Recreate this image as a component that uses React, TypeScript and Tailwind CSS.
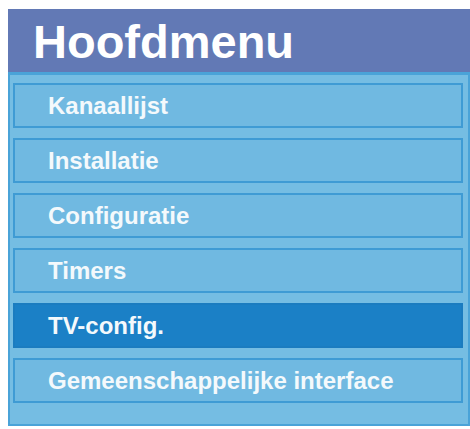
import React from "react";

const items = [
  "Kanaallijst",
  "Installatie",
  "Configuratie",
  "Timers",
  "TV-config.",
  "Gemeenschappelijke interface",
];

export default function App() {
  return (
    <div
      className="w-[470px] h-[429px] bg-white pl-[8px] pt-[9px] overflow-hidden"
      style={{ fontFamily: '"Liberation Sans", Arial, sans-serif' }}
    >
      <div className="w-[462px] flex flex-col">
        <div className="h-[63px] bg-[#6279b5] pl-[25px] flex items-center">
          <span className="text-[47px] font-bold text-white leading-none mt-[1px]">
            Hoofdmenu
          </span>
        </div>
        <div className="bg-[#75bde3] border-l-2 border-t-[3px] border-r-2 border-b-2 border-[#4aa3d8] pl-[3px] pt-[8px] pb-[21px] flex flex-col gap-[10px]">
          {items.map((it, i) => {
            const sel = i === 4;
            return (
              <div
                key={it}
                className={
                  sel
                    ? "w-[450px] h-[45px] bg-[#1b80c6] border-2 border-[#1b7cc0] pl-[33px] flex items-center"
                    : "w-[450px] h-[45px] bg-[#70b9e1] border-2 border-[#3f9bd4] pl-[33px] flex items-center"
                }
              >
                <span className="text-[24px] font-bold text-[#f4f9fc] leading-none mt-[1px]">
                  {it}
                </span>
              </div>
            );
          })}
        </div>
      </div>
    </div>
  );
}
